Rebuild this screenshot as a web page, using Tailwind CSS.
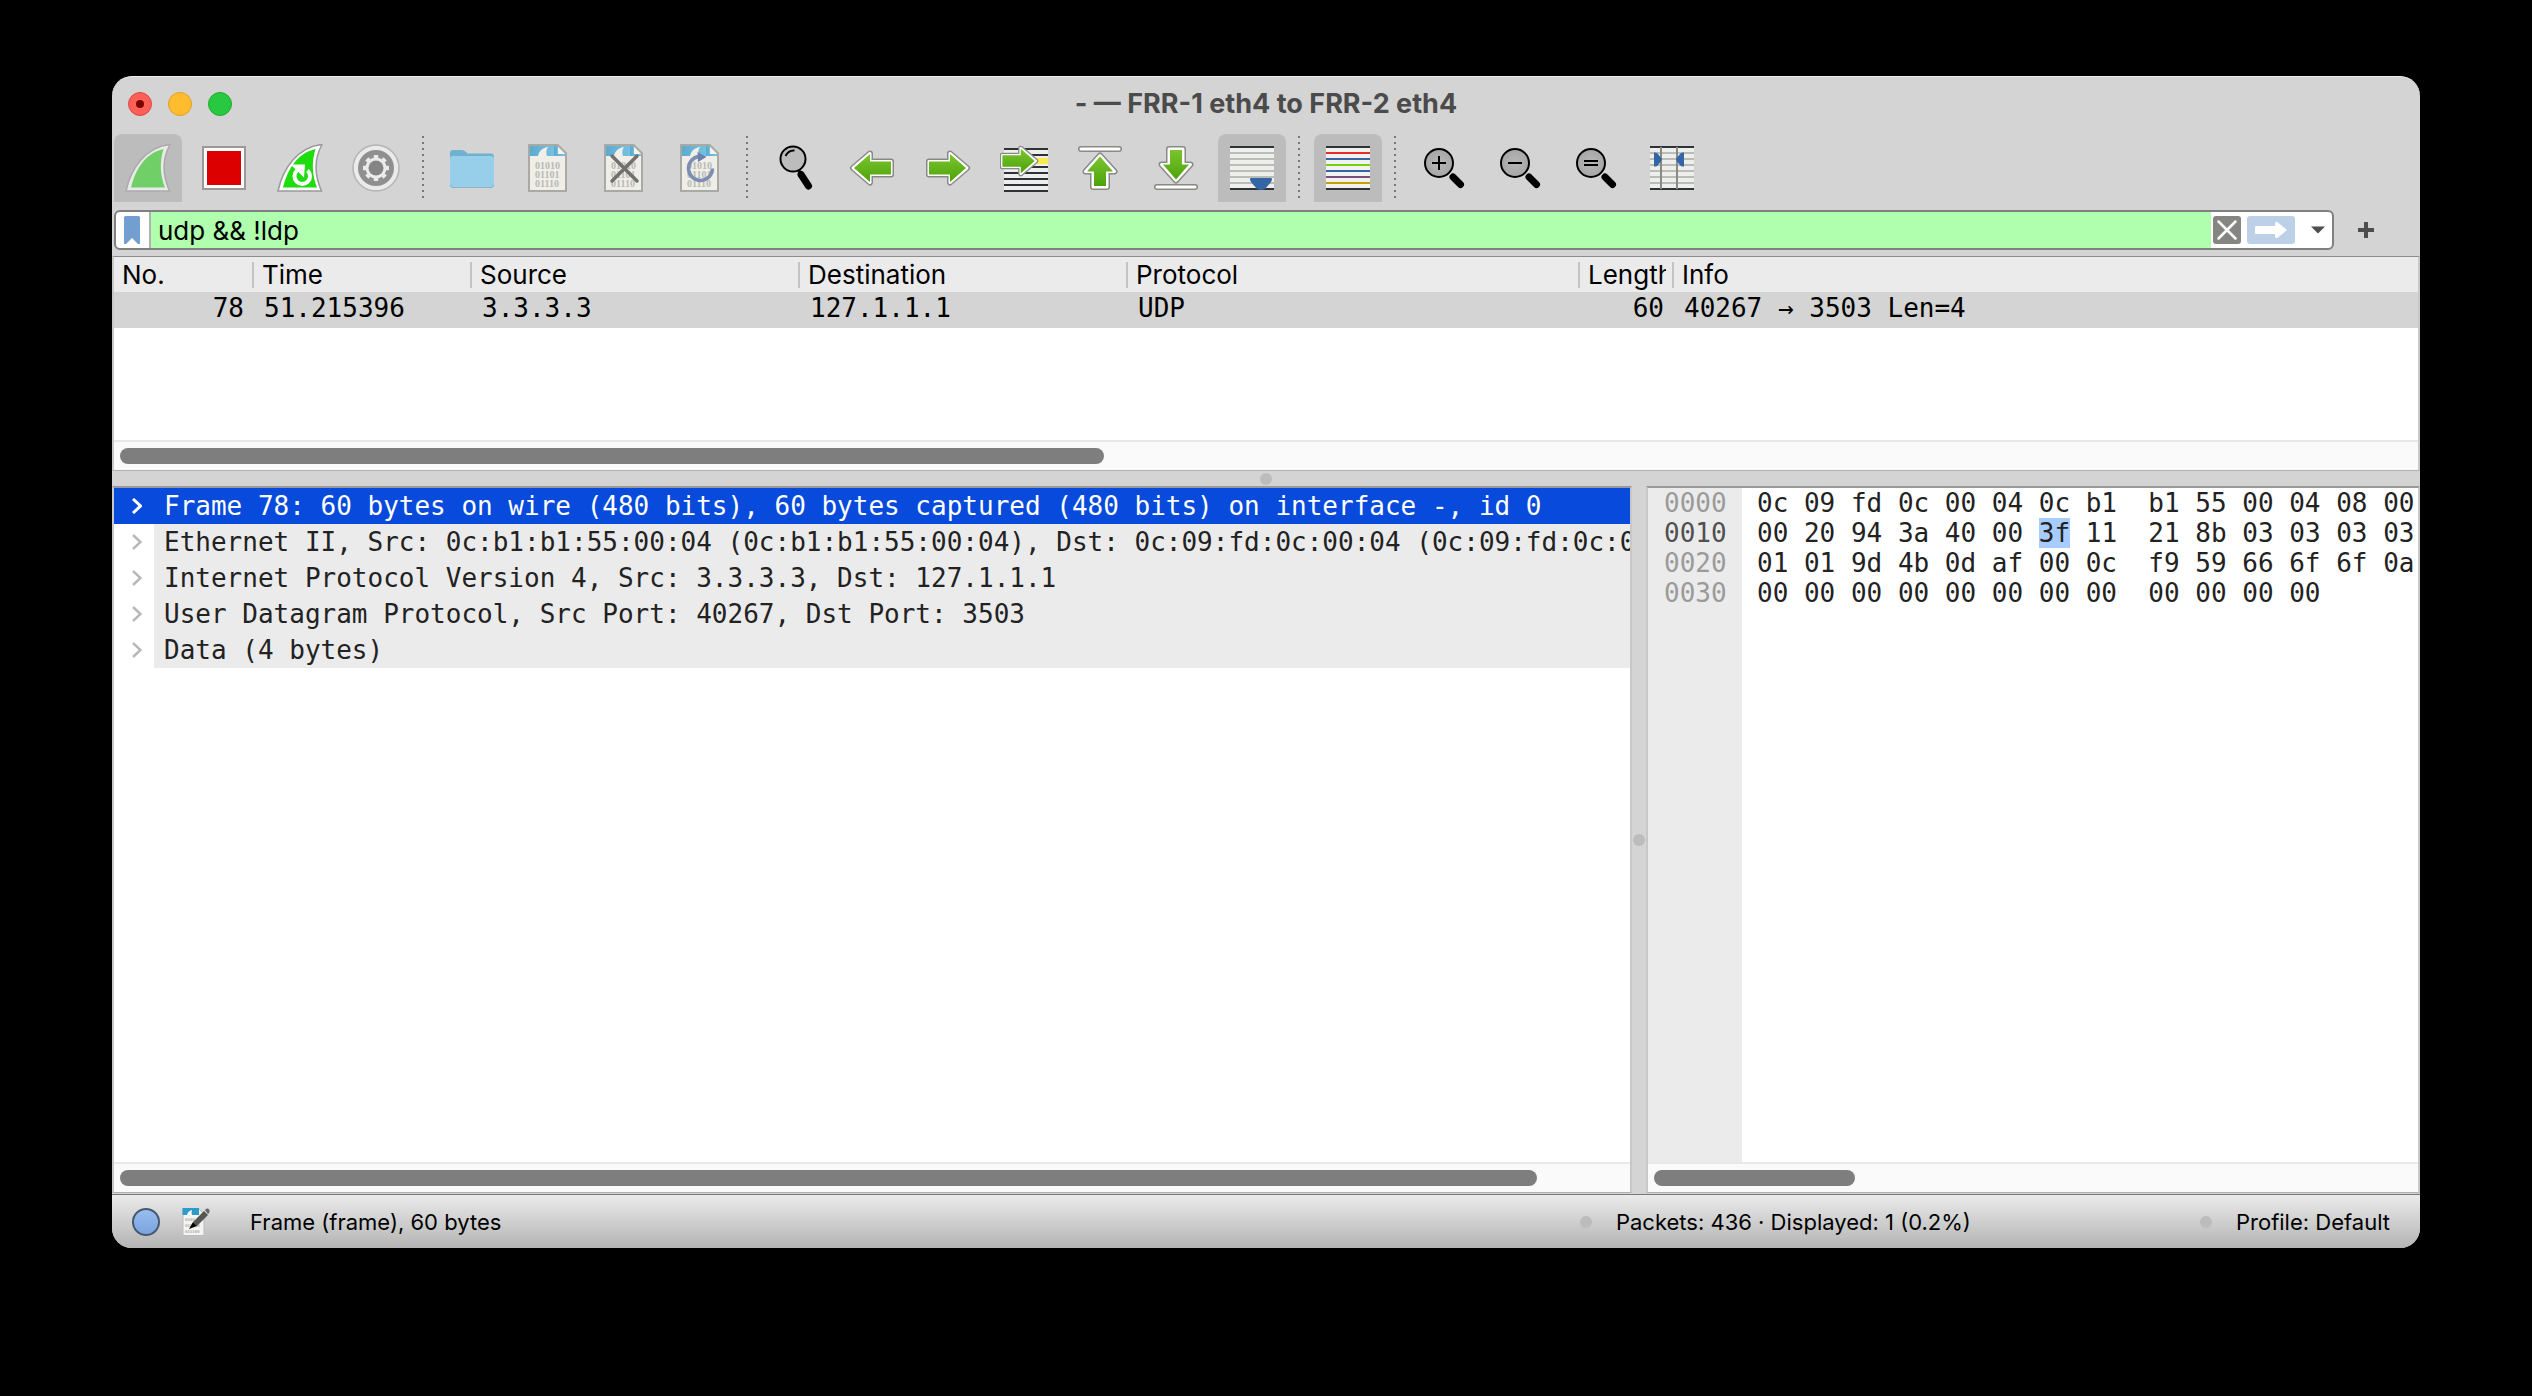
<!DOCTYPE html>
<html lang="en">
<head>
  <meta charset="UTF-8">
  <title>FRR-1 eth4 to FRR-2 eth4</title>
  <script src="https://cdn.jsdelivr.net/npm/@tailwindcss/browser@4"></script>
</head>
<body class="bg-black min-h-screen flex flex-col px-28 pt-[76px] pb-[148px] font-['Inter',sans-serif] text-[26px] text-black">

  <!-- shared artwork -->
  <svg class="absolute size-0" aria-hidden="true">
    <defs>
      <linearGradient id="green" x1="0" y1="0" x2="0" y2="1">
        <stop offset="0" stop-color="#7cc52f" />
        <stop offset="1" stop-color="#4da30a" />
      </linearGradient>
      <linearGradient id="sky" x1="0" y1="0" x2="1" y2="0">
        <stop offset="0" stop-color="#5cabd0" />
        <stop offset="1" stop-color="#7cc3e2" />
      </linearGradient>
      <radialGradient id="lens">
        <stop offset="0" stop-color="#b8b8b8" />
        <stop offset="1" stop-color="#a6a6a6" />
      </radialGradient>
    </defs>
    <symbol id="doc" viewBox="0 0 48 48">
      <path d="M5.500 1H34l8.500 8.500V47h-37z" fill="#efeee8" />
      <path d="M6 1.500h28V12H6z" fill="url(#sky)" />
      <path d="M14 12c1-5 5-8.500 10-9-2 3-2 6-1 9z" fill="#efeee8" />
      <path d="M33.500 1.500V10H42v2H30V1.500z" fill="url(#sky)" />
      <path d="M34 2.500l7.500 7.500H34z" fill="#f3f3ee" />
      <path d="M5 1h28.800l8.200 8.200V47H5z" fill="none" stroke="#a9aaa4" stroke-width="2" />
      <g font-family="Liberation Serif, serif" font-size="10" font-weight="bold" fill="#b9b9b1">
        <text x="11" y="25">01010</text>
        <text x="11" y="34">01101</text>
        <text x="11" y="43">01110</text>
      </g>
    </symbol>
    <symbol id="arrow" viewBox="0 0 48 40">
      <g stroke-linejoin="round">
        <path d="M5 13.500h21V5.500L43 20 26 34.500V26.500H5z" fill="#888a85" stroke="#888a85" stroke-width="6" />
        <path d="M5 13.500h21V5.500L43 20 26 34.500V26.500H5z" fill="#fff" stroke="#fff" stroke-width="3" />
        <path d="M5 13.500h21V6L42 20 26 34V26.500H5z" fill="url(#green)" />
      </g>
    </symbol>
    <symbol id="glass" viewBox="0 0 48 48">
      <path d="M31 31l7.500 7.500" stroke="#000" stroke-width="7" stroke-linecap="round" />
      <circle cx="17" cy="17" r="14" fill="url(#lens)" stroke="#000" stroke-width="2" />
    </symbol>
    <symbol id="sep" viewBox="0 0 12 68">
      <path d="M5 2v64" stroke="#777" stroke-width="2" stroke-dasharray="2 4" />
    </symbol>
  </svg>

  <main class="flex-1 flex flex-col bg-[#d4d4d4] rounded-[20px] overflow-hidden border-t border-[#eeeeee]">

    <!-- title bar -->
    <header class="grid grid-cols-3 items-center h-[57px] px-4 pb-1">
      <div class="flex gap-4">
        <button aria-label="Close" class="size-6 rounded-full bg-[#fe5f57] border border-[#dc4a43] flex items-center justify-center"><span class="size-2 rounded-full bg-[#7a0500]"></span></button>
        <button aria-label="Minimize" class="size-6 rounded-full bg-[#febc2e] border border-[#dea123]"></button>
        <button aria-label="Zoom" class="size-6 rounded-full bg-[#28c840] border border-[#1dad2b]"></button>
      </div>
      <h1 class="text-center text-[27px] leading-8 font-bold text-[#4b4b4b] whitespace-nowrap">- — FRR-1 eth4 to FRR-2 eth4</h1>
    </header>

    <!-- main toolbar -->
    <nav class="flex gap-2 px-0.5">
      <button aria-label="Start capture" class="size-[68px] rounded-t-lg bg-[#bcbcbc] flex items-center justify-center">
        <svg class="size-12" viewBox="0 0 48 48">
          <path d="M2 47C7 24 22 3 46 0.500 38 15 38 30 45.500 47z" fill="#eaeaea" stroke="#aaa" stroke-width="1.500" />
          <path d="M7 43.500C12 24 22 9 39.500 5 35.500 18 36 31 41 43.500z" fill="#70cf67" />
        </svg>
      </button>
      <button aria-label="Stop capture" class="size-[68px] flex items-center justify-center">
        <svg class="size-12" viewBox="0 0 48 48">
          <path d="M3 3h42v42H3z" fill="#fff" stroke="#999" stroke-width="2" />
          <path d="M7 7h34v34H7z" fill="#d00" />
        </svg>
      </button>
      <button aria-label="Restart capture" class="size-[68px] flex items-center justify-center">
        <svg class="size-12" viewBox="0 0 48 48">
          <path d="M2 47C7 24 22 3 46 0.500 38 15 38 30 45.500 47z" fill="#fff" stroke="#999" stroke-width="1.500" />
          <path d="M7 43.500C12 24 22 9 39.500 5 35.500 18 36 31 41 43.500z" fill="#1fdc0c" />
          <path d="M21 26.500a7.800 7.800 0 1 0 10.500 0" fill="none" stroke="#fff" stroke-width="4" />
          <path d="M14.500 20.500h14.500l-1 13z" fill="#fff" />
        </svg>
      </button>
      <button aria-label="Capture options" class="size-[68px] flex items-center justify-center">
        <svg class="size-12" viewBox="0 0 48 48">
          <circle cx="24" cy="24" r="23" fill="#eaeaea" stroke="#b4b4b4" stroke-width="1.500" />
          <circle cx="24" cy="24" r="18" fill="#8f8f8f" />
          <circle cx="24" cy="24" r="10.500" fill="#eaeaea" />
          <path d="M24 11v26M11 24h26M14.800 14.800l18.400 18.400M14.800 33.200l18.400-18.400" stroke="#eaeaea" stroke-width="4.500" />
          <circle cx="24" cy="24" r="7.500" fill="#858585" />
        </svg>
      </button>
      <svg class="w-3 h-[68px]"><use href="#sep" /></svg>
      <button aria-label="Open file" class="size-[68px] flex items-center justify-center">
        <svg class="size-12" viewBox="0 0 48 48">
          <path d="M2 9q0-3 3-3h9q2 0 4 2l1.500 1.500H43q3 0 3 3V20H2z" fill="#6fb1d0" />
          <path d="M2 15q0-3 3-3h38q3 0 3 3v26q0 3-3 3H5q-3 0-3-3z" fill="#97cfea" />
          <path d="M2.500 41q0 2.500 2.500 2.500h38q2.500 0 2.500-2.500" fill="none" stroke="#85b4c9" />
        </svg>
      </button>
      <button aria-label="Save file" class="size-[68px] flex items-center justify-center">
        <svg class="size-12"><use href="#doc" /></svg>
      </button>
      <button aria-label="Close file" class="size-[68px] flex items-center justify-center">
        <svg class="size-12" viewBox="0 0 48 48">
          <use href="#doc" />
          <path d="M12 12l25 25M37 12L12 37" stroke="#70716f" stroke-width="3.500" stroke-linecap="round" />
        </svg>
      </button>
      <button aria-label="Reload file" class="size-[68px] flex items-center justify-center">
        <svg class="size-12" viewBox="0 0 48 48">
          <use href="#doc" />
          <path d="M23 12.500a12 12 0 1 0 13.500 12" fill="none" stroke="#7c8eb2" stroke-width="3.500" />
          <path d="M21.500 8l9 5-8.500 5z" fill="#6a80ad" />
        </svg>
      </button>
      <svg class="w-3 h-[68px]"><use href="#sep" /></svg>
      <button aria-label="Find packet" class="size-[68px] flex items-center justify-center">
        <svg class="size-12" viewBox="0 0 48 48">
          <path d="M29 30.500l7.500 11.500" stroke="#000" stroke-width="7" stroke-linecap="round" />
          <path d="M26 25l3 5" stroke="#000" stroke-width="3" />
          <circle cx="21" cy="15" r="12.500" fill="#bcbcbc" stroke="#000" stroke-width="2" />
          <path d="M13.500 12q3-6 9-5.500" fill="none" stroke="#000" stroke-width="2" />
        </svg>
      </button>
      <button aria-label="Previous packet" class="size-[68px] flex items-center justify-center">
        <svg class="w-12 h-10 -scale-x-100"><use href="#arrow" /></svg>
      </button>
      <button aria-label="Next packet" class="size-[68px] flex items-center justify-center">
        <svg class="w-12 h-10"><use href="#arrow" /></svg>
      </button>
      <button aria-label="Go to packet" class="size-[68px] flex items-center justify-center">
        <svg class="size-12" viewBox="0 0 48 48">
          <path d="M4 4h44v44H4z" fill="#eeeeec" />
          <path d="M30 14h18v6H30z" fill="#fce94f" />
          <path d="M4 5h44M4 11h44M4 23h44M4 29h44M4 35h44M4 41h44M4 47h44" stroke="#2e3436" stroke-width="2" />
          <use href="#arrow" x="-2" y="-1" width="42" height="36" />
        </svg>
      </button>
      <button aria-label="First packet" class="size-[68px] flex items-center justify-center">
        <svg class="size-12" viewBox="0 0 48 48">
          <path d="M5 5h38" stroke="#888a85" stroke-width="6" stroke-linecap="round" />
          <path d="M5 5h38" stroke="#fff" stroke-width="3" stroke-linecap="round" />
          <path d="M24 11.500l14.500 16h-7.500V43h-14V27.500H9.500z" fill="#fff" stroke="#888a85" stroke-width="6" stroke-linejoin="round" />
          <path d="M24 11.500l14.500 16h-7.500V43h-14V27.500H9.500z" fill="#fff" stroke="#fff" stroke-width="3" stroke-linejoin="round" />
          <path d="M24 12.500l13 15h-7V42H18V27.500h-7z" fill="url(#green)" />
        </svg>
      </button>
      <button aria-label="Last packet" class="size-[68px] flex items-center justify-center">
        <svg class="size-12" viewBox="0 0 48 48">
          <path d="M5 43h38" stroke="#888a85" stroke-width="6" stroke-linecap="round" />
          <path d="M5 43h38" stroke="#fff" stroke-width="3" stroke-linecap="round" />
          <path d="M24 36.500l14.500-16h-7.500V5h-14v15.500H9.500z" fill="#fff" stroke="#888a85" stroke-width="6" stroke-linejoin="round" />
          <path d="M24 36.500l14.500-16h-7.500V5h-14v15.500H9.500z" fill="#fff" stroke="#fff" stroke-width="3" stroke-linejoin="round" />
          <path d="M24 35.500l13-15h-7V6H18v14.500h-7z" fill="url(#green)" />
        </svg>
      </button>
      <button aria-label="Auto scroll" class="size-[68px] rounded-t-lg bg-[#bcbcbc] flex items-center justify-center">
        <svg class="size-12" viewBox="0 0 48 48">
          <path d="M2 2h44v44H2z" fill="#eeeeec" />
          <path d="M2 9h44M2 15h44M2 21h44M2 27h44M2 33h44M2 39h44" stroke="#babdb6" stroke-width="2" />
          <path d="M2 3h44M2 45h44" stroke="#2e3436" stroke-width="2" />
          <path d="M22.500 34h21q1 1.500-.5 4l-6 7q-4 2-8 0l-6-7q-1.500-2.500-.5-4z" fill="#3465a4" />
        </svg>
      </button>
      <svg class="w-3 h-[68px]"><use href="#sep" /></svg>
      <button aria-label="Colorize packets" class="size-[68px] rounded-t-lg bg-[#bcbcbc] flex items-center justify-center">
        <svg class="size-12" viewBox="0 0 48 48" stroke-width="2">
          <path d="M2 2h44v44H2z" fill="#f2f2f0" />
          <path d="M2 3h44M2 45h44" stroke="#2e3436" />
          <path d="M2 9h44" stroke="#ef2929" />
          <path d="M2 15h44" stroke="#3465a4" />
          <path d="M2 21h44" stroke="#73d216" />
          <path d="M2 27h44" stroke="#3465a4" />
          <path d="M2 33h44" stroke="#75507b" />
          <path d="M2 39h44" stroke="#c4a000" />
        </svg>
      </button>
      <svg class="w-3 h-[68px]"><use href="#sep" /></svg>
      <button aria-label="Zoom in" class="size-[68px] flex items-center justify-center">
        <svg class="size-12" viewBox="0 0 48 48">
          <use href="#glass" x="2" y="2" width="48" height="48" />
          <path d="M12 19h14M19 12v14" stroke="#000" stroke-width="2" />
        </svg>
      </button>
      <button aria-label="Zoom out" class="size-[68px] flex items-center justify-center">
        <svg class="size-12" viewBox="0 0 48 48">
          <use href="#glass" x="2" y="2" width="48" height="48" />
          <path d="M12 19h14" stroke="#000" stroke-width="2" />
        </svg>
      </button>
      <button aria-label="Normal size" class="size-[68px] flex items-center justify-center">
        <svg class="size-12" viewBox="0 0 48 48">
          <use href="#glass" x="2" y="2" width="48" height="48" />
          <path d="M12 17h14M12 21h14" stroke="#000" stroke-width="2" />
        </svg>
      </button>
      <button aria-label="Resize columns" class="size-[68px] flex items-center justify-center">
        <svg class="size-12" viewBox="0 0 48 48">
          <path d="M2 2h44v44H2z" fill="#eeeeec" />
          <path d="M2 9h44M2 15h44M2 21h44M2 27h44M2 33h44M2 39h44" stroke="#babdb6" stroke-width="2" />
          <path d="M2 3h44M2 45h44" stroke="#2e3436" stroke-width="2" />
          <path d="M13 3v42M29 3v42" stroke="#888a85" stroke-width="2" />
          <path d="M6 8.500q3-.5 4 1.500l4 5q0 1.500-4 6-1 2-4 1.500zM36 8.500q-3-.5-4 1.500l-4 5q0 1.500 4 6 1 2 4 1.500z" fill="#3465a4" />
        </svg>
      </button>
    </nav>

    <!-- display filter -->
    <form class="flex items-center pl-0.5 pr-[46px] pt-2 pb-1.5 gap-6">
      <div class="flex-1 flex items-center h-10 bg-white border-2 border-[#808080] rounded-md overflow-hidden">
        <button type="button" aria-label="Bookmarks" class="w-[35px] h-full pl-2 border-r-2 border-[#b0b0b0] flex items-center">
          <svg class="w-4 h-7" viewBox="0 0 16 28"><path d="M0 1.500Q0 0 1.500 0h13Q16 0 16 1.500V28l-2 0-6-6-6 6H0z" fill="#729fcf" /></svg>
        </button>
        <input type="text" aria-label="Display filter" value="udp &amp;&amp; !ldp" class="flex-1 h-full bg-[#afffaf] pl-[7px] outline-none">
        <button type="reset" aria-label="Clear" class="ml-0.5">
          <svg class="size-7" viewBox="0 0 28 28">
            <rect width="28" height="28" rx="3" fill="#858681" />
            <path d="M5.500 5.500l17 17M22.500 5.500l-17 17" stroke="#fff" stroke-width="2.500" stroke-linecap="round" />
          </svg>
        </button>
        <button type="submit" aria-label="Apply" class="ml-1.5">
          <svg class="w-12 h-7" viewBox="0 0 48 28">
            <rect width="48" height="28" rx="3" fill="#bcd0e8" />
            <path d="M9 10h19V7q1-2 3-.5L40 14l-9 7.500q-2 1.500-3-.5v-3H9q-1 0-1-1v-6q0-1 1-1z" fill="#fff" />
          </svg>
        </button>
        <button type="button" aria-label="Recent filters" class="ml-4 mr-[7px]">
          <svg class="w-[14px] h-2" viewBox="0 0 14 8"><path d="M0 0.500h14L7 7.500z" fill="#4d4d4d" /></svg>
        </button>
      </div>
      <button type="button" aria-label="Add filter button">
        <svg class="size-4" viewBox="0 0 16 16"><path d="M8 0v16M0 8h16" stroke="#4d4d4d" stroke-width="4" /></svg>
      </button>
    </form>

    <!-- packet list -->
    <section class="flex flex-col h-[215px] bg-white border-x-2 border-y border-x-[#c8c8c8] border-t-[#8c8c8c] border-b-[#b0b0b0]">
      <table class="w-full table-fixed whitespace-nowrap">
        <thead class="bg-[#ebebeb] text-left">
          <tr class="h-[35px]">
            <th class="w-[140px] p-0 font-normal"><div class="h-[26px] leading-[26px] pl-2 pr-1.5 border-r-2 border-[#c4c4c4]">No.</div></th>
            <th class="w-[218px] p-0 font-normal"><div class="h-[26px] leading-[26px] pl-2 pr-1.5 border-r-2 border-[#c4c4c4]">Time</div></th>
            <th class="w-[328px] p-0 font-normal"><div class="h-[26px] leading-[26px] pl-2 pr-1.5 border-r-2 border-[#c4c4c4]">Source</div></th>
            <th class="w-[328px] p-0 font-normal"><div class="h-[26px] leading-[26px] pl-2 pr-1.5 border-r-2 border-[#c4c4c4]">Destination</div></th>
            <th class="w-[452px] p-0 font-normal"><div class="h-[26px] leading-[26px] pl-2 pr-1.5 border-r-2 border-[#c4c4c4]">Protocol</div></th>
            <th class="w-[94px] p-0 font-normal"><div class="h-[26px] leading-[26px] pl-2 pr-1.5 border-r-2 border-[#c4c4c4]"><span class="block overflow-x-clip">Length</span></div></th>
            <th class="p-0 font-normal"><div class="h-[26px] leading-[26px] pl-2">Info</div></th>
          </tr>
        </thead>
        <tbody class="font-['DejaVu_Sans_Mono',monospace]">
          <tr class="h-9 bg-[#d4d4d4] leading-8 align-top">
            <td class="p-0 pr-2.5 text-right">78</td>
            <td class="p-0 pl-2.5">51.215396</td>
            <td class="p-0 pl-2.5">3.3.3.3</td>
            <td class="p-0 pl-2.5">127.1.1.1</td>
            <td class="p-0 pl-2.5">UDP</td>
            <td class="p-0 pr-2.5 text-right">60</td>
            <td class="p-0 pl-2.5">40267 → 3503 Len=4</td>
          </tr>
        </tbody>
      </table>
      <div class="mt-auto border-t-2 border-[#e8e8e8] bg-[#fafafa] py-1.5 pl-1.5"><div class="h-4 w-[984px] rounded-full bg-[#7e7e7e]"></div></div>
    </section>

    <div class="h-[15px] flex items-center justify-center"><span class="size-3 rounded-full bg-[#bcbcbc]"></span></div>

    <div class="flex-1 flex min-h-0">
      <!-- packet details -->
      <section class="flex-1 min-w-0 flex flex-col bg-white border-x-2 border-t-2 border-b border-x-[#c8c8c8] border-t-[#9a9a9a] border-b-[#b0b0b0]">
        <ul class="font-['DejaVu_Sans_Mono',monospace] leading-9 whitespace-nowrap overflow-hidden text-[#222]">
          <li class="flex bg-[#084adb] text-white">
            <button aria-label="Expand" class="w-10 shrink-0 pl-[18px]"><svg class="w-[10px] h-4" viewBox="0 0 10 16"><path d="M1 1l7.500 7L1 15" fill="none" stroke="#fff" stroke-width="3" /></svg></button>
            <span class="flex-1 pl-2.5">Frame 78: 60 bytes on wire (480 bits), 60 bytes captured (480 bits) on interface -, id 0</span>
          </li>
          <li class="flex">
            <button aria-label="Expand" class="w-10 shrink-0 pl-[18px]"><svg class="w-[10px] h-4" viewBox="0 0 10 16"><path d="M1 1l7.500 7L1 15" fill="none" stroke="#b8b8b8" stroke-width="2.500" /></svg></button>
            <span class="flex-1 pl-2.5 bg-[#ebebeb]">Ethernet II, Src: 0c:b1:b1:55:00:04 (0c:b1:b1:55:00:04), Dst: 0c:09:fd:0c:00:04 (0c:09:fd:0c:00:04)</span>
          </li>
          <li class="flex">
            <button aria-label="Expand" class="w-10 shrink-0 pl-[18px]"><svg class="w-[10px] h-4" viewBox="0 0 10 16"><path d="M1 1l7.500 7L1 15" fill="none" stroke="#b8b8b8" stroke-width="2.500" /></svg></button>
            <span class="flex-1 pl-2.5 bg-[#ebebeb]">Internet Protocol Version 4, Src: 3.3.3.3, Dst: 127.1.1.1</span>
          </li>
          <li class="flex">
            <button aria-label="Expand" class="w-10 shrink-0 pl-[18px]"><svg class="w-[10px] h-4" viewBox="0 0 10 16"><path d="M1 1l7.500 7L1 15" fill="none" stroke="#b8b8b8" stroke-width="2.500" /></svg></button>
            <span class="flex-1 pl-2.5 bg-[#ebebeb]">User Datagram Protocol, Src Port: 40267, Dst Port: 3503</span>
          </li>
          <li class="flex">
            <button aria-label="Expand" class="w-10 shrink-0 pl-[18px]"><svg class="w-[10px] h-4" viewBox="0 0 10 16"><path d="M1 1l7.500 7L1 15" fill="none" stroke="#b8b8b8" stroke-width="2.500" /></svg></button>
            <span class="flex-1 pl-2.5 bg-[#ebebeb]">Data (4 bytes)</span>
          </li>
        </ul>
        <div class="mt-auto border-t-2 border-[#e8e8e8] bg-[#fafafa] py-1.5 pl-1.5"><div class="h-4 w-[1417px] rounded-full bg-[#7e7e7e]"></div></div>
      </section>

      <div class="w-[14px] flex items-center justify-center"><span class="size-3 rounded-full bg-[#bcbcbc]"></span></div>

      <!-- packet bytes -->
      <section class="w-[774px] shrink-0 flex flex-col bg-white border-x-2 border-t-2 border-b border-x-[#c8c8c8] border-t-[#9a9a9a] border-b-[#b0b0b0]">
        <div class="flex-1 flex font-['DejaVu_Sans_Mono',monospace] leading-[30px] overflow-hidden">
          <pre class="font-[inherit] w-[94px] shrink-0 pl-4 bg-[#ebebeb] text-[#9a9a9a]">0000
<span class="text-[#505050]">0010</span>
0020
0030</pre>
          <pre class="font-[inherit] flex-1 pl-[15px] text-[#222]">0c 09 fd 0c 00 04 0c b1  b1 55 00 04 08 00
00 20 94 3a 40 00 <span class="bg-[#a7cdff]">3f</span> 11  21 8b 03 03 03 03
01 01 9d 4b 0d af 00 0c  f9 59 66 6f 6f 0a
00 00 00 00 00 00 00 00  00 00 00 00</pre>
        </div>
        <div class="border-t-2 border-[#e8e8e8] bg-[#fafafa] py-1.5 pl-1.5"><div class="h-4 w-[201px] rounded-full bg-[#7e7e7e]"></div></div>
      </section>
    </div>

    <!-- status bar -->
    <footer class="mt-px h-[54px] flex items-center text-[22px] border-t border-[#777] bg-linear-to-b from-[#ebebeb] to-[#b4b4b4] pl-5 pr-[30px]">
      <button aria-label="Expert information" class="size-7 rounded-full bg-linear-to-b from-[#97bdf0] to-[#7ba4de] border-2 border-[#46596f]"></button>
      <button aria-label="Capture comment" class="ml-[22px]">
        <svg class="size-7" viewBox="0 0 28 28">
          <path d="M1 .5h15.500L22 6v21.500H1z" fill="#f4f4f0" stroke="#bbb" />
          <path d="M.5 0H17v7H.5z" fill="#2f9bcb" />
          <path d="M5 7q1-4 5-5-1 3 0 5z" fill="#fff" />
          <g font-family="Liberation Serif, serif" font-size="5" font-weight="bold" fill="#aaa">
            <text x="3" y="13">0101</text>
            <text x="3" y="19">011010</text>
            <text x="3" y="25">011100</text>
          </g>
          <path d="M11 14L22 3l4 4-11 11z" fill="#555753" />
          <path d="M11 14l4 4-8 3z" fill="#000" />
          <path d="M23 2q1-2 3-1.500Q28.500 2 27 5l-1 1z" fill="#666" />
        </svg>
      </button>
      <span class="flex-1 ml-10 pt-0.5">Frame (frame), 60 bytes</span>
      <span class="size-3 rounded-full bg-[#bcbcbc]"></span>
      <span class="ml-6 pt-0.5 w-[584px]">Packets: 436 · Displayed: 1 (0.2%)</span>
      <span class="size-3 rounded-full bg-[#bcbcbc]"></span>
      <span class="ml-6 pt-0.5">Profile: Default</span>
    </footer>
  </main>
</body>
</html>
